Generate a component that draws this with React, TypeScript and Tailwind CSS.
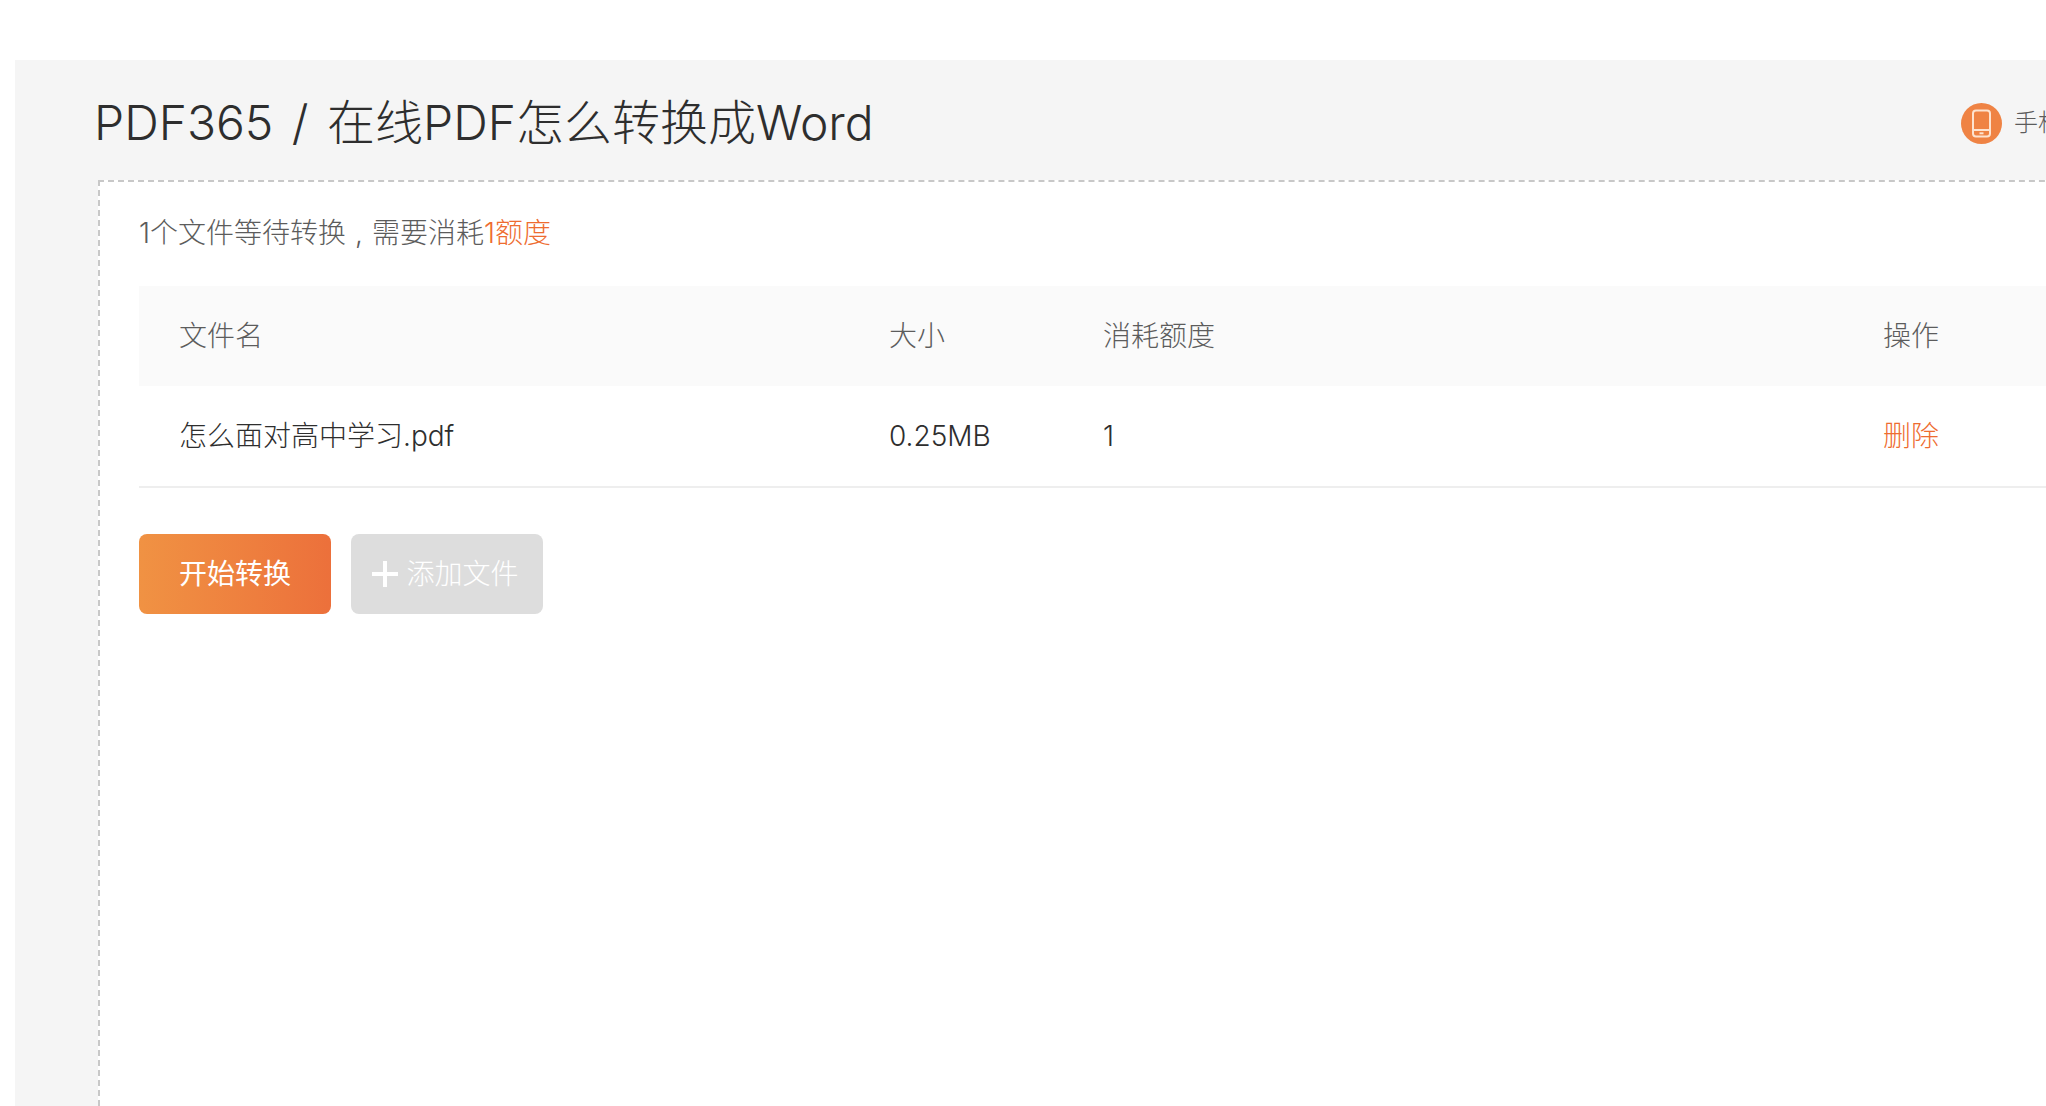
export default function App() {
  return (
    <div className="h-[1106px] w-[2046px] overflow-hidden bg-white pt-[60px] pl-[15px] font-['Inter','Noto_Sans_CJK_SC',sans-serif] font-light text-[#2e2e2e]">
      <div className="h-[1046px] w-[2200px] bg-[#f5f5f5] pl-[83px]">
        <div className="flex h-[120px] w-[2117px] items-center justify-between pt-[6px]">
          <h1 className="-ml-[4px] text-[48px] leading-[66px] font-light whitespace-nowrap">
            PDF365<span className="mx-[5px]"> / </span>在线PDF怎么转换成Word
          </h1>
          <div className="flex w-[254px] shrink-0 items-center gap-3">
            <svg width="41" height="41" viewBox="0 0 41 41" className="shrink-0">
              <circle cx="20.5" cy="20.5" r="20.5" fill="#ef8344" />
              <rect x="12" y="7.5" width="17" height="26" rx="3" fill="none" stroke="#fde3d0" strokeWidth="2" />
              <path d="M12.5 27h16" stroke="#fde3d0" strokeWidth="2" />
              <path d="M18.5 30.3h4" stroke="#fde3d0" strokeWidth="2" />
            </svg>
            <span className="text-[24px] whitespace-nowrap text-[#5c5c5c]">手机版转换</span>
          </div>
        </div>
        <div className="h-[926px] w-[2117px] border-t-2 border-l-2 border-dashed border-[#c8c8c8] bg-white pl-[39px]">
          <p className="flex h-[104px] items-center pb-[2px] text-[28px] text-[#5c5c5c]">
            1个文件等待转换<span className="inline-block w-[26px] text-center">,</span>需要消耗<span className="text-[#ee6c30]">1额度</span>
          </p>
          <div className="grid h-[100px] w-[2000px] grid-cols-[710px_214px_780px_1fr] items-center bg-[#fafafa] pl-[40px] text-[28px] text-[#5c5c5c]">
            <span>文件名</span>
            <span>大小</span>
            <span>消耗额度</span>
            <span>操作</span>
          </div>
          <div className="grid h-[102px] w-[2000px] grid-cols-[710px_214px_780px_1fr] items-center border-b-2 border-[#eeeeee] pl-[40px] text-[28px] text-[#2e2e2e]">
            <span>怎么面对高中学习.pdf</span>
            <span>0.25MB</span>
            <span>1</span>
            <span className="text-[#ee6c30]">删除</span>
          </div>
          <div className="mt-[46px] flex gap-5">
            <button className="h-20 w-[192px] rounded-lg bg-gradient-to-r from-[#f09243] to-[#ec703b] text-[28px] font-normal text-white">开始转换</button>
            <button className="flex h-20 w-[192px] items-center justify-center gap-[8px] rounded-lg bg-[#dddddd] pr-[3px] text-[28px] font-light text-white">
              <svg width="26" height="26" viewBox="0 0 26 26"><path d="M13 0v26M0 13h26" stroke="#fff" strokeWidth="4" /></svg>
              添加文件
            </button>
          </div>
        </div>
      </div>
    </div>
  );
}
